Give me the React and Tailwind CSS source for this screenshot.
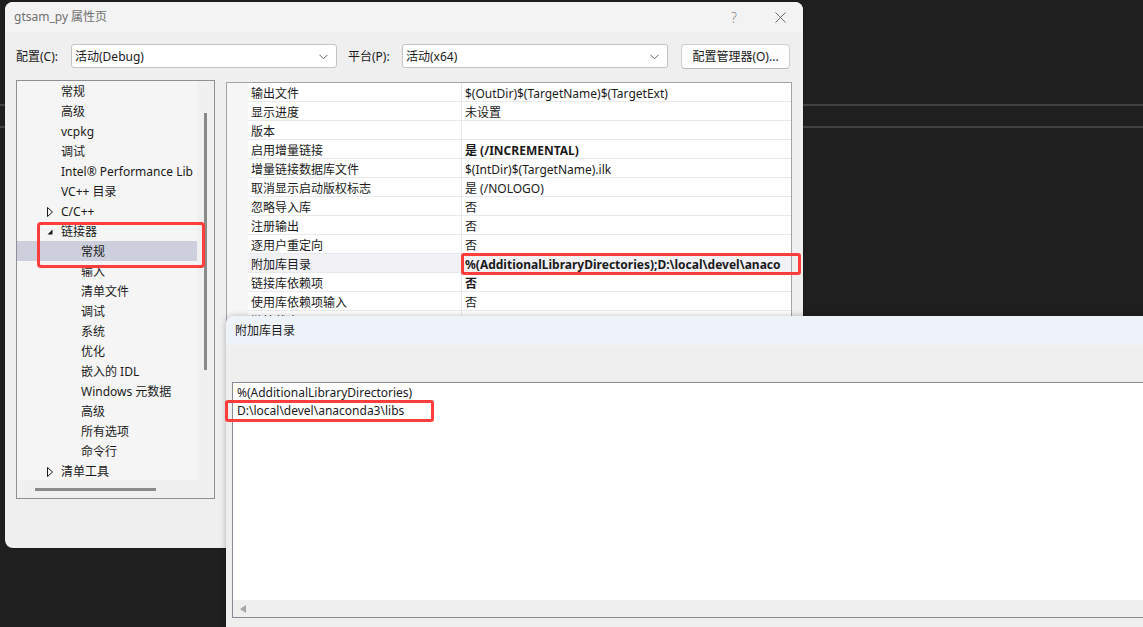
const TREE = [
  { label: '常规', depth: 1 },
  { label: '高级', depth: 1 },
  { label: 'vcpkg', depth: 1 },
  { label: '调试', depth: 1 },
  { label: 'Intel® Performance Lib', depth: 1 },
  { label: 'VC++ 目录', depth: 1 },
  { label: 'C/C++', depth: 1, toggle: 'closed' },
  { label: '链接器', depth: 1, toggle: 'open' },
  { label: '常规', depth: 2, selected: true },
  { label: '输入', depth: 2 },
  { label: '清单文件', depth: 2 },
  { label: '调试', depth: 2 },
  { label: '系统', depth: 2 },
  { label: '优化', depth: 2 },
  { label: '嵌入的 IDL', depth: 2 },
  { label: 'Windows 元数据', depth: 2 },
  { label: '高级', depth: 2 },
  { label: '所有选项', depth: 2 },
  { label: '命令行', depth: 2 },
  { label: '清单工具', depth: 1, toggle: 'closed' },
];

const PROPS = [
  { name: '输出文件', value: '$(OutDir)$(TargetName)$(TargetExt)' },
  { name: '显示进度', value: '未设置' },
  { name: '版本', value: '' },
  { name: '启用增量链接', value: '是 (/INCREMENTAL)', bold: true },
  { name: '增量链接数据库文件', value: '$(IntDir)$(TargetName).ilk' },
  { name: '取消显示启动版权标志', value: '是 (/NOLOGO)' },
  { name: '忽略导入库', value: '否' },
  { name: '注册输出', value: '否' },
  { name: '逐用户重定向', value: '否' },
  { name: '附加库目录', value: '%(AdditionalLibraryDirectories);D:\\local\\devel\\anaco', bold: true, current: true },
  { name: '链接库依赖项', value: '否', bold: true },
  { name: '使用库依赖项输入', value: '否' },
  { name: '链接状态', value: '' },
];

function Chevron() {
  return (
    <svg width="9" height="6" viewBox="0 0 9 6" className="shrink-0">
      <path d="M0.5 0.8 L4.5 4.8 L8.5 0.8" fill="none" stroke="#606060" strokeWidth="1" />
    </svg>
  );
}

function Select({ value }) {
  return (
    <div className="w-[266px] h-[24px] bg-white border border-[#c4c4c4] rounded-[3px] flex items-center pl-[3px] pr-[8px] pt-[1px]">
      <span className="flex-1 text-[12px] text-[#1a1a1a] truncate">{value}</span>
      <Chevron />
    </div>
  );
}

function Toggle({ kind }) {
  if (kind === 'open') {
    return (
      <svg width="6" height="6" viewBox="0 0 6 6">
        <path d="M5.5 0.5 L5.5 5.5 L0.5 5.5 Z" fill="#1a1a1a" />
      </svg>
    );
  }
  return (
    <svg width="6" height="10" viewBox="0 0 6 10">
      <path d="M0.5 0.5 L5.5 5 L0.5 9.5 Z" fill="none" stroke="#1a1a1a" strokeWidth="1" />
    </svg>
  );
}

function TreePanel() {
  return (
    <div className="w-[199px] h-[419px] border border-[#8f9096] bg-[#f0f0f0] flex flex-col">
      <div className="flex flex-1 min-h-0">
        <div className="w-[180px] bg-[#f5f5f5] overflow-hidden">
          {TREE.map((item, i) => (
            <div
              key={i}
              className={`h-[20px] flex items-center pt-[2px] text-[12px] text-[#1a1a1a] whitespace-nowrap ${item.selected ? 'bg-[#cdd0dc]' : ''}`}
            >
              <div className="w-[44px] shrink-0 flex justify-end pr-[8px]">
                {item.toggle && <Toggle kind={item.toggle} />}
              </div>
              {item.depth === 2 && <div className="w-[20px] shrink-0" />}
              <span>{item.label}</span>
            </div>
          ))}
        </div>
        <div className="flex-1 flex pl-[7px] pt-[32px]">
          <div className="w-[3px] h-[257px] bg-[#8a8a8a]" />
        </div>
      </div>
      <div className="h-[18px] flex items-center pl-[18px]">
        <div className="w-[121px] h-[3px] bg-[#8a8a8a]" />
      </div>
    </div>
  );
}

function PropertyGrid() {
  return (
    <div className="mt-[2px] w-[566px] h-[450px] border border-[#a3a3a8] bg-white flex overflow-hidden">
      <div className="w-[21px] shrink-0 bg-[#f6f6f6]" />
      <div className="flex-1 flex flex-col">
        {PROPS.map((p, i) => (
          <div key={i} className={`h-[19px] flex border-b border-[#e8e8ef] text-[12px] text-[#1a1a1a] ${p.current ? 'bg-[#f1f1f6]' : ''}`}>
            <div className="w-[214px] shrink-0 border-r border-[#e8e8ef] flex items-center pt-[3px] pl-[3px] whitespace-nowrap">
              {p.name}
            </div>
            <div className={`flex-1 flex items-center pt-[3px] pl-[3px] whitespace-nowrap overflow-hidden ${p.bold ? 'font-bold' : ''}`}>
              {p.value}
            </div>
          </div>
        ))}
      </div>
    </div>
  );
}

function PropertyPages() {
  return (
    <div className="absolute left-[5px] top-[2px] w-[798px] h-[546px] rounded-[8px] bg-[#efefef] flex flex-col overflow-hidden shadow-[0_0_0_1px_rgba(0,0,0,0.15)]">
      {/* title bar */}
      <div className="h-[30px] bg-[#f3f3f3] flex items-center pl-[9px]">
        <span className="text-[12px] text-[#707070]">gtsam_py 属性页</span>
        <div className="flex-1" />
        <div className="w-[46px] text-center text-[14px] text-[#8a8a8a] font-light">?</div>
        <div className="w-[46px] flex justify-center">
          <svg width="11" height="11" viewBox="0 0 11 11">
            <path d="M0.5 0.5 L10.5 10.5 M10.5 0.5 L0.5 10.5" stroke="#6b6b6b" strokeWidth="1" />
          </svg>
        </div>
      </div>

      {/* configuration / platform */}
      <div className="h-[48px] flex items-center pl-[11px] text-[12px] text-[#1a1a1a]">
        <span className="w-[55px] pt-[1px]">配置(C):</span>
        <Select value="活动(Debug)" />
        <span className="w-[54px] ml-[11px] pt-[1px]">平台(P):</span>
        <Select value="活动(x64)" />
        <button className="ml-[13px] w-[109px] h-[25px] pt-[1px] bg-[#fdfdfd] border border-[#d0d0d0] border-b-[#b8b8b8] rounded-[4px] text-[12px] text-[#1a1a1a]">
          配置管理器(O)...
        </button>
      </div>

      <div className="flex pl-[11px] gap-[11px]">
        <TreePanel />
        <PropertyGrid />
      </div>
    </div>
  );
}

function DirectoryEditor() {
  return (
    <div className="absolute left-[226px] top-[316px] w-[930px] h-[330px] rounded-tl-[8px] bg-[#efefef] flex flex-col overflow-hidden shadow-[0_0_6px_rgba(0,0,0,0.25)]">
      <div className="h-[29px] bg-[#eef2f9] flex items-center pl-[9px] pt-[1px] text-[12px] text-[#1a1a1a]">
        附加库目录
      </div>
      <div className="h-[37px]" />
      <div className="ml-[6px] h-[236px] border border-[#8a8a94] bg-white flex flex-col">
        <div className="flex-1 pl-[4px] pt-[1px] text-[12px] leading-[18px] text-[#1a1a1a]">
          <div>%(AdditionalLibraryDirectories)</div>
          <div>D:\local\devel\anaconda3\libs</div>
        </div>
        <div className="h-[17px] bg-[#efefef] flex items-center pl-[7px]">
          <svg width="6" height="8" viewBox="0 0 6 8">
            <path d="M6 0 L0 4 L6 8 Z" fill="#a6a6a6" />
          </svg>
        </div>
      </div>
    </div>
  );
}

export default function App() {
  return (
    <div className="relative w-[1143px] h-[627px] overflow-hidden bg-[#1f1f1f] font-['Noto_Sans','Noto_Sans_CJK_SC',sans-serif]">
      {/* editor panes behind the dialogs */}
      <div className="flex flex-col">
        <div className="h-[104px]" />
        <div className="h-[2px] bg-[#424242]" />
        <div className="h-[20px]" />
        <div className="h-[2px] bg-[#424242]" />
      </div>

      <PropertyPages />

      {/* highlight marks */}
      <div className="absolute left-[37px] top-[222px] w-[168px] h-[46px] border-[3px] border-[#ff3d3d] rounded-[4px]" />
      <div className="absolute left-[461px] top-[253px] w-[340px] h-[22px] border-[3px] border-[#ff3d3d] rounded-[3px]" />

      <DirectoryEditor />

      <div className="absolute left-[225px] top-[400px] w-[209px] h-[22px] border-[3px] border-[#ff3d3d] rounded-[3px]" />
    </div>
  );
}
